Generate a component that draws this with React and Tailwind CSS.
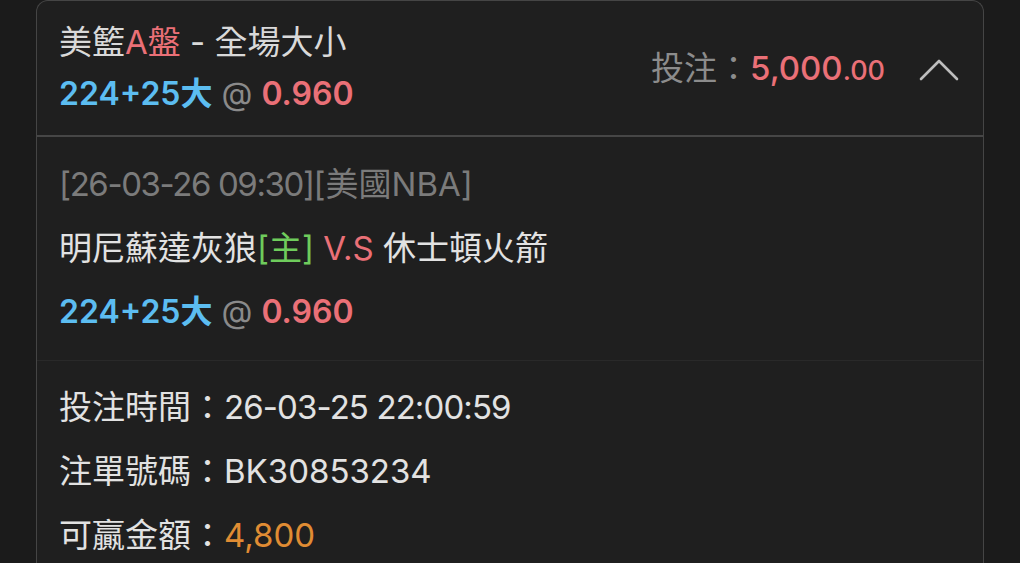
import React from "react";

const FONT = { fontFamily: 'Inter, "Noto Sans CJK TC", "Noto Sans", sans-serif' };

function Odds() {
  return (
    <div className="text-[32px] font-semibold">
      <span className="text-[#5cbdf1]">224+25大</span>
      <span className="text-[#8a8a8a] font-normal"> @ </span>
      <span className="text-[#ea7077]">0.960</span>
    </div>
  );
}

export default function App() {
  return (
    <div className="min-h-[563px] bg-[#1b1b1b] px-[36px] overflow-hidden" style={FONT}>
      <div className="border-[1.5px] border-b-0 border-[#454545] rounded-t-[12px] bg-[#1f1f1f]">
        {/* header */}
        <div className="flex items-center justify-between pl-[22px] pr-[24px] pt-[21px] pb-[21px] border-b-[2px] border-[#464646]">
          <div className="flex flex-col gap-[12px] leading-[40px]">
            <div className="text-[33px] text-[#d9d9d9]">
              美籃<span className="text-[#ea7077]">A盤</span> - 全場大小
            </div>
            <Odds />
          </div>
          <div className="flex items-center gap-[34px] pt-[2px]">
            <div className="text-[33px] leading-[40px] text-[#8c8c8c]">
              投注：<span className="text-[#ea7077] font-medium">5,000<span className="text-[27px]">.00</span></span>
            </div>
            <svg width="40" height="24" viewBox="0 0 40 24" fill="none">
              <path d="M2 22 L20 4 L38 22" stroke="#bdbdbd" strokeWidth="2.6" strokeLinecap="round" strokeLinejoin="round" />
            </svg>
          </div>
        </div>
        {/* body */}
        <div className="pl-[22px] pt-[15px] pb-[16px] border-b border-[#292929] text-[33px] leading-[64px]">
          <div className="text-[#7b7b7b]">
            <span className="tracking-[-1.4px]">[26-03-26 09:30]</span>[美國NBA]
          </div>
          <div className="text-[#e2e2e2]">
            明尼蘇達灰狼<span className="text-[#6fcc5c]">[主]</span>{" "}
            <span className="text-[#ea7077]">V.S</span> 休士頓火箭
          </div>
          <div className="leading-[64px]">
            <Odds />
          </div>
        </div>
        {/* footer */}
        <div className="pl-[22px] pt-[14px] text-[33px] leading-[64px] text-[#e2e2e2]">
          <div>
            投注時間：<span className="tracking-[-0.9px]">26-03-25 22:00:59</span>
          </div>
          <div>注單號碼：BK30853234</div>
          <div>
            可贏金額：<span className="text-[#e08c33]">4,800</span>
          </div>
        </div>
      </div>
    </div>
  );
}
